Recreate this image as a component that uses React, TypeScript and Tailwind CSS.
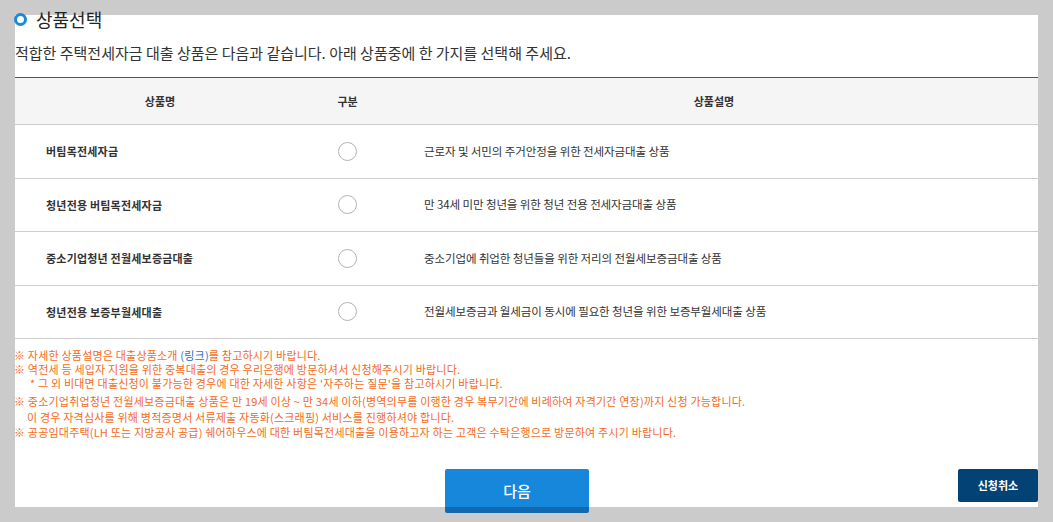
import React, { useState } from "react";

const products = [
  { name: "버팀목전세자금", desc: "근로자 및 서민의 주거안정을 위한 전세자금대출 상품" },
  { name: "청년전용 버팀목전세자금", desc: "만 34세 미만 청년을 위한 청년 전용 전세자금대출 상품" },
  { name: "중소기업청년 전월세보증금대출", desc: "중소기업에 취업한 청년들을 위한 저리의 전월세보증금대출 상품" },
  { name: "청년전용 보증부월세대출", desc: "전월세보증금과 월세금이 동시에 필요한 청년을 위한 보증부월세대출 상품" },
];

export default function App() {
  const [selected, setSelected] = useState<number | null>(null);

  return (
    <div className="min-h-screen bg-[#cbcbcb] px-[15px] py-[15px] font-['Noto_Sans_CJK_KR','Noto_Sans',sans-serif] text-[#222]">
      <div className="flex flex-col bg-white">
        {/* title */}
        <div className="-mt-[8px] -ml-px flex h-[24px] items-center">
          <span className="h-[13px] w-[13px] rounded-full border-[3px] border-[#1a8ad8] bg-white" />
          <h2 className="ml-[9px] text-[18px] leading-[24px] text-[#222]">상품선택</h2>
        </div>
        <p className="mt-[12px] h-[20px] text-[15px] leading-[20px] text-[#333]">
          적합한 주택전세자금 대출 상품은 다음과 같습니다. 아래 상품중에 한 가지를 선택해 주세요.
        </p>

        {/* product table */}
        <div className="mt-[14px] border-t border-[#555]">
          <div className="grid h-[47px] grid-cols-[290px_85px_1fr] items-center border-b border-[#ccc] bg-[#f5f5f5] text-center text-[11px] font-bold text-[#333]">
            <div>상품명</div>
            <div>구분</div>
            <div>상품설명</div>
          </div>
          {products.map((p, i) => (
            <div
              key={p.name}
              className="grid h-[53.5px] grid-cols-[290px_85px_1fr] items-center border-b border-[#ccc] text-[11px]"
            >
              <div className="pl-[31px] font-bold tracking-[0.2px] text-[#333]">{p.name}</div>
              <div className="flex justify-center">
                <button
                  type="button"
                  onClick={() => setSelected(i)}
                  className="flex h-[19px] w-[19px] items-center justify-center rounded-full border border-[#b3b3b3] bg-white"
                >
                  {selected === i && <span className="h-[9px] w-[9px] rounded-full bg-[#1787dc]" />}
                </button>
              </div>
              <div className="pl-[34px] text-[11.5px] tracking-[-0.1px] text-[#333]">{p.desc}</div>
            </div>
          ))}
        </div>

        {/* notice */}
        <div className="mt-[9px] -ml-px text-[11px] leading-[14px] tracking-[0.2px] text-[#f26b1d]">
          <div className="h-[14px]">
            ※ 자세한 상품설명은 대출상품소개 <a href="#" className="text-[#2f6fc7]">(링크)</a>를 참고하시기 바랍니다.
          </div>
          <div className="h-[14px]">※ 역전세 등 세입자 지원을 위한 중복대출의 경우 우리은행에 방문하셔서 신청해주시기 바랍니다.</div>
          <div className="h-[14px] pl-[16px]">* 그 외 비대면 대출신청이 불가능한 경우에 대한 자세한 사항은 '자주하는 질문'을 참고하시기 바랍니다.</div>
          <div className="mt-[4px] h-[14px]">
            ※ 중소기업취업청년 전월세보증금대출 상품은 만 19세 이상 ~ 만 34세 이하(병역의무를 이행한 경우 복무기간에 비례하여 자격기간 연장)까지 신청 가능합니다.
          </div>
          <div className="mt-[2px] h-[14px] pl-[13px]">이 경우 자격심사를 위해 병적증명서 서류제출 자동화(스크래핑) 서비스를 진행하셔야 합니다.</div>
          <div className="mt-px h-[14px]">
            ※ 공공임대주택(LH 또는 지방공사 공급) 쉐어하우스에 대한 버팀목전세대출을 이용하고자 하는 고객은 수탁은행으로 방문하여 주시기 바랍니다.
          </div>
        </div>

        {/* buttons */}
        <div className="mt-[30px] flex h-[38px] items-start">
          <button
            type="button"
            className="-mb-[6px] ml-[430px] h-[44px] w-[144px] rounded-[2px] bg-[linear-gradient(to_bottom,#1787dc_38px,#1369ae_38px)] text-[15px] font-medium text-white"
          >
            다음
          </button>
          <button
            type="button"
            className="ml-auto h-[33px] w-[80px] rounded-[2px] bg-[#034275] text-[11px] font-bold text-white"
          >
            신청취소
          </button>
        </div>
      </div>
    </div>
  );
}
